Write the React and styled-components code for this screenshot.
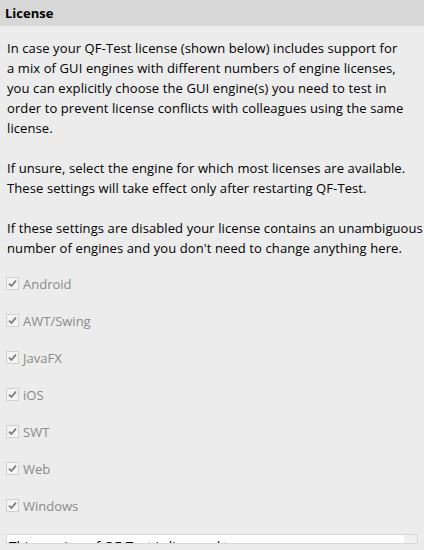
import React from "react";
import styled, { createGlobalStyle } from "styled-components";

const Global = createGlobalStyle`
  html, body { margin: 0; padding: 0; background: #ececec; }
  body { font-family: "Segoe UI", "Open Sans", "Noto Sans", sans-serif; }
`;

const Page = styled.div`
  width: 424px;
  height: 550px;
  overflow: hidden;
  background: #ececec;
  display: flex;
  flex-direction: column;
`;

const Header = styled.div`
  height: 26px;
  flex: 0 0 26px;
  background: #d8d8d8;
  display: flex;
  align-items: center;
  padding-left: 5px;
  font-weight: 700;
  font-size: 13px;
  color: #000;
`;

const Body = styled.div`
  padding: 12px 0 0 7px;
  display: flex;
  flex-direction: column;
`;

const Para = styled.p`
  margin: 0 0 20px 0;
  font-size: 13px;
  letter-spacing: 0.1px;
  line-height: 20px;
  color: #000;
  white-space: nowrap;
`;

const Options = styled.div`
  display: flex;
  flex-direction: column;
  margin-top: -13px;
`;

const Row = styled.label`
  height: 37px;
  display: flex;
  align-items: center;
  gap: 4px;
  font-size: 13px;
  color: #8a8a8a;
`;

const Box = styled.span`
  width: 11px;
  height: 11px;
  border: 1px solid #d0d0d0;
  background: #f4f4f4;
  display: flex;
  align-items: center;
  justify-content: center;
  margin-left: -1px;
`;

const LicenseBox = styled.div`
  box-sizing: border-box;
  margin: 10px 6px 0 6px;
  height: 10px;
  flex: 0 0 10px;
  border: 1px solid #d8d8d8;
  background: #fff;
  display: flex;
  overflow: hidden;
`;

const LicenseText = styled.div`
  flex: 1;
  padding: 2px 0 0 2px;
  font-size: 13.5px;
  line-height: 18px;
  color: #000;
  white-space: nowrap;
`;

const ScrollTrack = styled.div`
  width: 13px;
  background: #f0f0f0;
`;

const Check = () => (
  <svg width="9" height="9" viewBox="0 0 9 9">
    <path d="M1 4.6 L3.4 7 L8 1.6" fill="none" stroke="#7a7a7a" strokeWidth="1.7" />
  </svg>
);

const engines = ["Android", "AWT/Swing", "JavaFX", "iOS", "SWT", "Web", "Windows"];

export default function App() {
  return (
    <Page>
      <Global />
      <Header>License</Header>
      <Body>
        <Para>
          In case your QF-Test license (shown below) includes support for<br />
          a mix of GUI engines with different numbers of engine licenses,<br />
          you can explicitly choose the GUI engine(s) you need to test in<br />
          order to prevent license conflicts with colleagues using the same<br />
          license.
        </Para>
        <Para>
          If unsure, select the engine for which most licenses are available.<br />
          These settings will take effect only after restarting QF-Test.
        </Para>
        <Para>
          If these settings are disabled your license contains an unambiguous<br />
          number of engines and you don't need to change anything here.
        </Para>
        <Options>
          {engines.map((e) => (
            <Row key={e}>
              <Box><Check /></Box>
              {e}
            </Row>
          ))}
        </Options>
      </Body>
      <LicenseBox>
        <LicenseText>This version of QF-Test is licensed to</LicenseText>
        <ScrollTrack />
      </LicenseBox>
    </Page>
  );
}
